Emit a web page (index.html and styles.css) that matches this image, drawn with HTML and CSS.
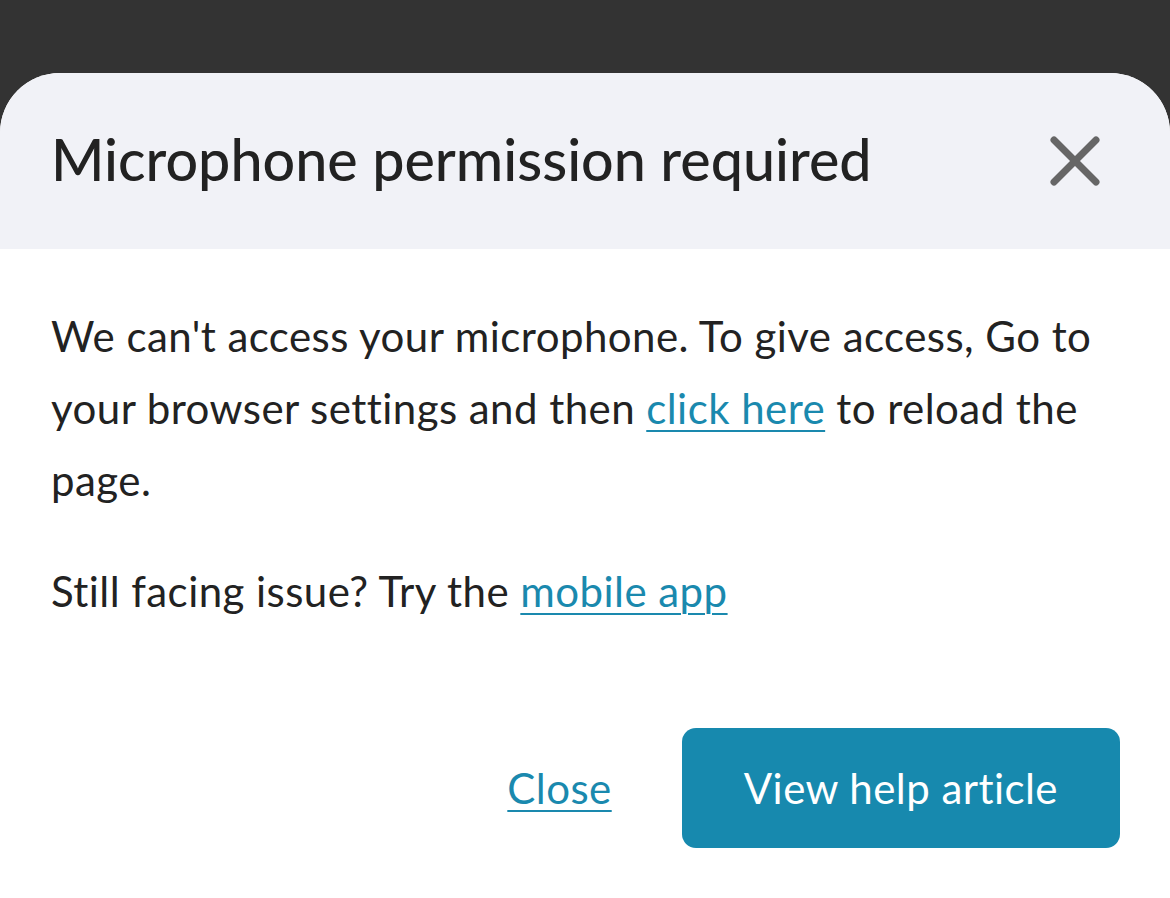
FILE: index.html
```html
<!DOCTYPE html>
<html lang="en">
<head>
<meta charset="utf-8">
<title>Microphone permission required</title>
<link rel="stylesheet" href="styles.css">
</head>
<body>
<div class="backdrop">
  <div class="modal" role="dialog" aria-labelledby="modal-title">
    <header class="modal-header">
      <h1 id="modal-title" class="modal-title">Microphone permission required</h1>
      <button class="icon-close" aria-label="Close">
        <svg width="50" height="50" viewBox="0 0 50 50" aria-hidden="true">
          <line x1="4" y1="4" x2="46" y2="46" />
          <line x1="46" y1="4" x2="4" y2="46" />
        </svg>
      </button>
    </header>
    <div class="modal-body">
      <p class="text">We can't access your microphone. To give access, Go to your browser settings and then <a href="#" class="link">click here</a> to reload the page.</p>
      <p class="text">Still facing issue? Try the <a href="#" class="link">mobile app</a></p>
    </div>
    <div class="modal-actions">
      <a href="#" class="link link-close">Close</a>
      <button class="btn-primary">View help article</button>
    </div>
  </div>
</div>
</body>
</html>
```
FILE: styles.css
```css
html, body {
  margin: 0;
  padding: 0;
  height: 100%;
}
body {
  background: #333333;
  font-family: "Lato", "Noto Sans", sans-serif;
  color: #222222;
}
.backdrop {
  height: 100%;
  display: flex;
  flex-direction: column;
  padding-top: 73px;
  box-sizing: border-box;
}
.modal {
  flex: 1;
  background: #ffffff;
  border-radius: 60px 60px 0 0;
  overflow: hidden;
  display: flex;
  flex-direction: column;
}
.modal-header {
  height: 176px;
  box-sizing: border-box;
  background: #f1f2f7;
  display: flex;
  align-items: center;
  justify-content: space-between;
  padding: 0 70px 0 51px;
}
.modal-title {
  margin: 0;
  font-size: 57.4px;
  font-weight: 500;
  line-height: 1;
  color: #222222;
  position: relative;
  top: -2px;
}
.icon-close {
  border: 0;
  background: none;
  padding: 0;
  width: 50px;
  height: 50px;
  cursor: pointer;
  display: block;
}
.icon-close svg {
  display: block;
}
.icon-close line {
  stroke: #666666;
  stroke-width: 7;
  stroke-linecap: round;
}
.modal-body {
  padding: 51px 51px 0;
}
.text {
  margin: 0 0 39px;
  font-size: 42px;
  line-height: 72px;
  letter-spacing: 0.45px;
}
.text:last-child {
  margin-bottom: 0;
}
.link {
  color: #1a89ae;
  text-decoration: underline;
  text-decoration-thickness: 2px;
  text-underline-offset: 6px;
}
.modal-actions {
  display: flex;
  justify-content: flex-end;
  align-items: center;
  gap: 70px;
  padding: 101px 50px 0;
}
.link-close {
  font-size: 42px;
  letter-spacing: 0.45px;
}
.btn-primary {
  height: 120px;
  border: 0;
  border-radius: 14px;
  background: #1789ae;
  color: #ffffff;
  font-family: inherit;
  font-size: 42px;
  letter-spacing: 0.45px;
  padding: 0 62px;
  cursor: pointer;
}
```
